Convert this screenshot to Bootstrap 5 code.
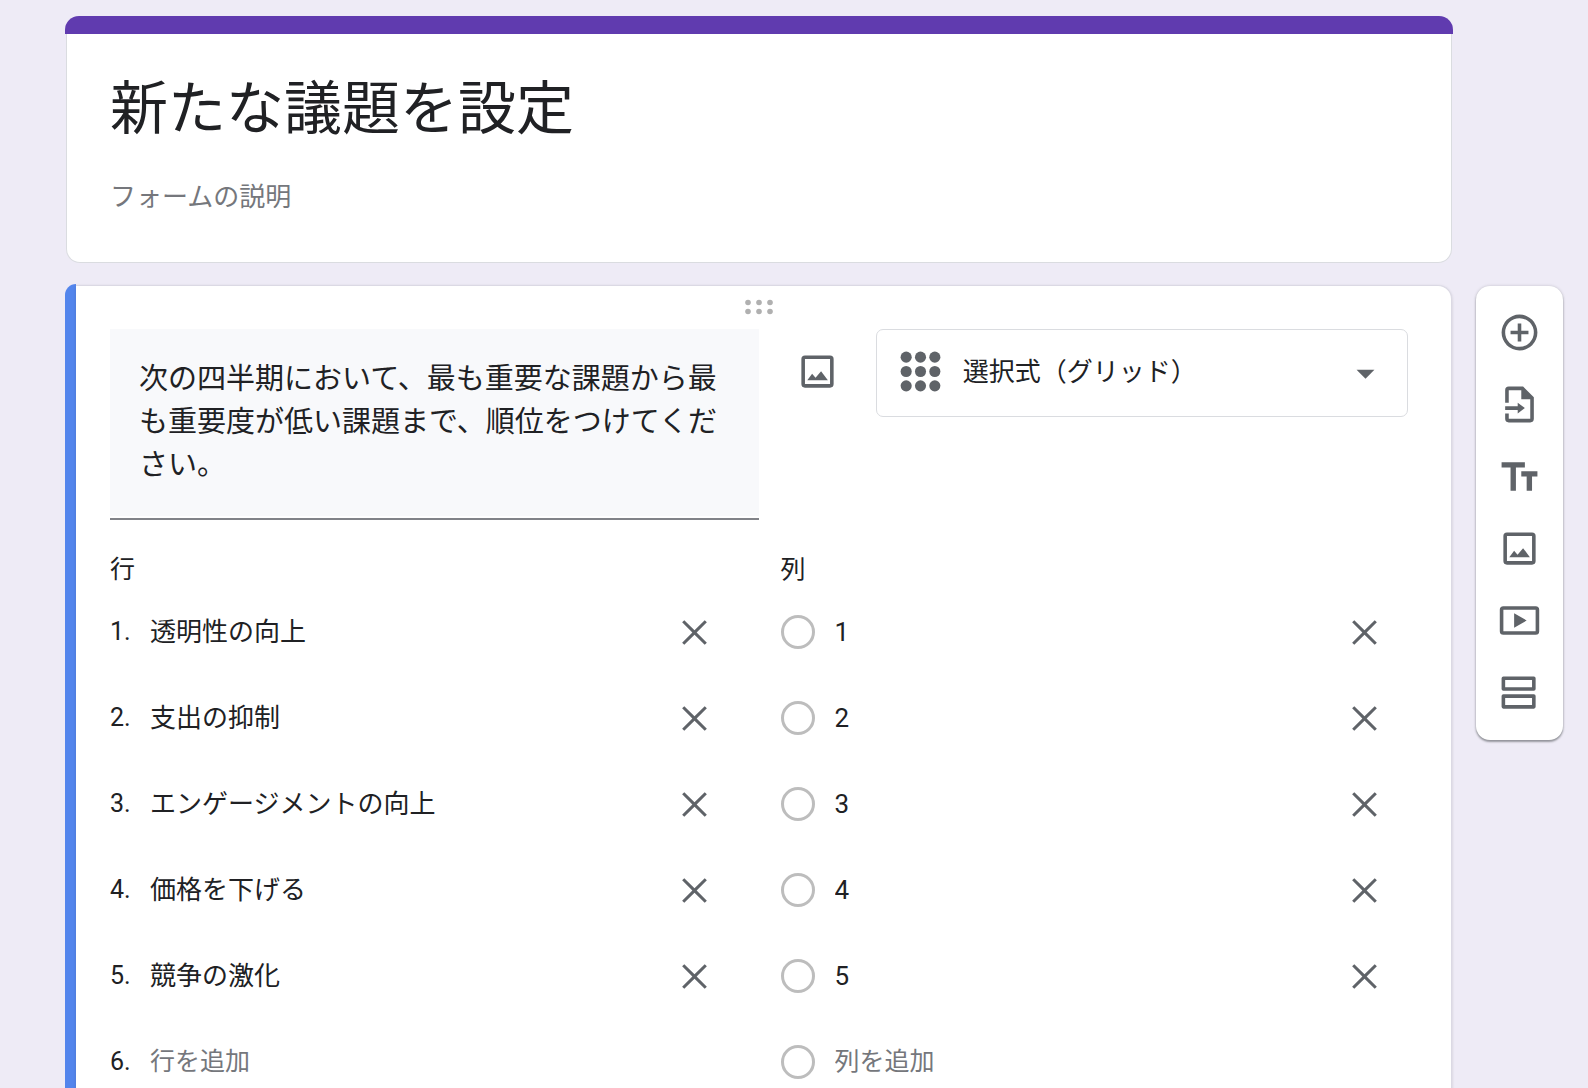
<!DOCTYPE html>
<html lang="ja">
<head>
<meta charset="utf-8">
<meta name="viewport" content="width=device-width, initial-scale=1">
<title>新たな議題を設定</title>
<link rel="stylesheet" href="https://cdn.jsdelivr.net/npm/bootstrap@5.3.0/dist/css/bootstrap.min.css">
<style>
  :root { --ink: #202124; --icon: #5f6368; --hint: #75777c; --edge: #dadce0; }
  body { background: #eeebf6; color: var(--ink); font-family: Roboto, "Noto Sans CJK JP", sans-serif; font-size: 26px; }
  .page { padding: 16px 25px 0 65px; }
  .form-head { margin-right: 110px; }
  .head-bar { height: 18px; background: #603baf; border-radius: 14px 14px 0 0; }
  .head-body { margin: 0 1px; padding: 32px 43px 45px; background: #fff; border: 1px solid var(--edge); border-top: 0; border-radius: 0 0 14px 14px; }
  .plain-field { display: block; width: 100%; min-width: 0; padding: 0; border: 0; outline: 0; background: transparent; color: var(--ink); line-height: 40px; height: 40px; }
  .plain-field::placeholder { color: var(--hint); opacity: 1; }
  .form-title { font-size: 58px; line-height: 86px; height: 86px; }
  .form-desc { margin-top: 25px; }
  .question-row { gap: 23px; margin-top: 21px; }
  .active-bar { width: 11px; background: #5385ec; border-radius: 11px 0 0 0; }
  .question-card { margin: 1px 1px 0 0; padding: 0 43px 24px 34px; background: #fff; border: 1px solid #dbd9e4; border-left: 0; border-radius: 0 14px 0 0; box-shadow: 0 1px 3px rgba(60,64,67,.2); }
  .drag { height: 43px; padding-bottom: 2px; }
  .question-box { flex: 0 0 50%; padding-bottom: 2px; border-bottom: 2px solid #818388; }
  .question-text { display: block; width: 100%; height: 187px; padding: 29px; border: 0; outline: 0; resize: none; overflow: hidden; background: #f8f9fb; color: var(--ink); font-size: 29px; line-height: 43px; }
  .side-image { height: 85px; }
  .type-box { flex: 0 0 41%; height: 88px; padding: 0 20px 3px 22px; border: 1px solid var(--edge); border-radius: 7px; }
  .type-select { appearance: none; margin-left: 21px; padding: 0; border: 0; outline: 0; background: transparent; color: var(--ink); height: 40px; line-height: 40px; }
  .icon-btn { display: flex; align-items: center; justify-content: center; padding: 0; border: 0; background: transparent; color: var(--icon); }
  .icon-btn svg, .type-box svg { display: block; width: 43px; height: 43px; fill: currentColor; color: var(--icon); flex: none; }
  .lists { gap: 43px; margin-top: 30px; }
  .list-name { height: 39px; line-height: 40px; font-size: 25px; }
  .entry { height: 86px; }
  .entry .icon-btn { margin-right: 22px; }
  .entry-no { width: 40px; font-size: 25px; flex: none; }
  .add-field { font-size: 25px; }
  .entry-radio { appearance: none; flex: none; width: 34px; height: 34px; margin: 0 20px 0 0; border: 3px solid #bdbdbd; border-radius: 50%; background: #fff; }
  .tools { width: 87px; flex: none; margin-top: 2px; padding: 10px 0 12px; background: #fff; border-radius: 14px; box-shadow: 0 2px 2px rgba(60,64,67,.45), 0 0 3px rgba(60,64,67,.25); }
  .tools .icon-btn { width: 100%; height: 72px; }
</style>
<script src="https://cdn.jsdelivr.net/npm/bootstrap@5.3.0/dist/js/bootstrap.bundle.min.js"></script>
</head>
<body>
<svg class="d-none" xmlns="http://www.w3.org/2000/svg">
  <symbol id="i-close" viewBox="0 0 24 24"><path d="M18.9 6.3 17.7 5.1 12 10.8 6.3 5.1 5.1 6.3 10.8 12l-5.7 5.7 1.2 1.2L12 13.2l5.7 5.7 1.2-1.2L13.2 12z"/></symbol>
  <symbol id="i-image" viewBox="0 0 24 24"><path d="M19 5v14H5V5h14m0-2H5a2 2 0 0 0-2 2v14a2 2 0 0 0 2 2h14a2 2 0 0 0 2-2V5a2 2 0 0 0-2-2zM6.3 16.9 9 13.2l1.9 2.3 3.1-3.7 3.8 5.1z"/></symbol>
</svg>
<div class="page vh-100 overflow-hidden">
  <header class="form-head">
    <div class="head-bar"></div>
    <div class="head-body">
      <input class="plain-field form-title" type="text" aria-label="フォームのタイトル" value="新たな議題を設定">
      <input class="plain-field form-desc" type="text" aria-label="フォームの説明" placeholder="フォームの説明">
    </div>
  </header>

  <div class="question-row d-flex align-items-start">
    <main class="d-flex flex-grow-1">
      <div class="active-bar flex-shrink-0"></div>
      <section class="question-card flex-grow-1">
        <div class="drag d-flex align-items-center justify-content-center">
          <svg width="28" height="16" viewBox="0 0 28 16" fill="#b0b0b0"><circle cx="3" cy="3.5" r="2.8"/><circle cx="14" cy="3.5" r="2.8"/><circle cx="25" cy="3.5" r="2.8"/><circle cx="3" cy="12.5" r="2.8"/><circle cx="14" cy="12.5" r="2.8"/><circle cx="25" cy="12.5" r="2.8"/></svg>
        </div>
        <div class="d-flex align-items-start">
          <div class="question-box">
            <textarea class="question-text" aria-label="質問">次の四半期において、最も重要な課題から最も重要度が低い課題まで、順位をつけてください。</textarea>
          </div>
          <div class="flex-grow-1 d-flex justify-content-center">
            <button class="icon-btn side-image" type="button" aria-label="画像を追加"><svg><use href="#i-image"/></svg></button>
          </div>
          <div class="type-box d-flex align-items-center">
            <svg viewBox="0 0 24 24"><circle cx="4" cy="4" r="3.1"/><circle cx="12" cy="4" r="3.1"/><circle cx="20" cy="4" r="3.1"/><circle cx="4" cy="12" r="3.1"/><circle cx="12" cy="12" r="3.1"/><circle cx="20" cy="12" r="3.1"/><circle cx="4" cy="20" r="3.1"/><circle cx="12" cy="20" r="3.1"/><circle cx="20" cy="20" r="3.1"/></svg>
            <select class="type-select flex-grow-1" aria-label="質問の形式"><option>選択式（グリッド）</option></select>
            <svg viewBox="0 0 24 24"><path d="M7 11l5 5 5-5z"/></svg>
          </div>
        </div>

        <div class="lists d-flex">
          <div class="flex-fill w-50">
            <div class="list-name">行</div>
            <div class="entry d-flex align-items-center"><label class="entry-no" for="r1">1.</label><input class="plain-field" id="r1" type="text" value="透明性の向上"><button class="icon-btn" type="button" aria-label="行 1 を削除"><svg><use href="#i-close"/></svg></button></div>
            <div class="entry d-flex align-items-center"><label class="entry-no" for="r2">2.</label><input class="plain-field" id="r2" type="text" value="支出の抑制"><button class="icon-btn" type="button" aria-label="行 2 を削除"><svg><use href="#i-close"/></svg></button></div>
            <div class="entry d-flex align-items-center"><label class="entry-no" for="r3">3.</label><input class="plain-field" id="r3" type="text" value="エンゲージメントの向上"><button class="icon-btn" type="button" aria-label="行 3 を削除"><svg><use href="#i-close"/></svg></button></div>
            <div class="entry d-flex align-items-center"><label class="entry-no" for="r4">4.</label><input class="plain-field" id="r4" type="text" value="価格を下げる"><button class="icon-btn" type="button" aria-label="行 4 を削除"><svg><use href="#i-close"/></svg></button></div>
            <div class="entry d-flex align-items-center"><label class="entry-no" for="r5">5.</label><input class="plain-field" id="r5" type="text" value="競争の激化"><button class="icon-btn" type="button" aria-label="行 5 を削除"><svg><use href="#i-close"/></svg></button></div>
            <div class="entry d-flex align-items-center"><label class="entry-no" for="r6">6.</label><input class="plain-field add-field" id="r6" type="text" placeholder="行を追加"></div>
          </div>
          <div class="flex-fill w-50">
            <div class="list-name">列</div>
            <div class="entry d-flex align-items-center"><input class="entry-radio" type="radio" name="col" aria-label="列 1"><input class="plain-field" type="text" aria-label="列 1 の名前" value="1"><button class="icon-btn" type="button" aria-label="列 1 を削除"><svg><use href="#i-close"/></svg></button></div>
            <div class="entry d-flex align-items-center"><input class="entry-radio" type="radio" name="col" aria-label="列 2"><input class="plain-field" type="text" aria-label="列 2 の名前" value="2"><button class="icon-btn" type="button" aria-label="列 2 を削除"><svg><use href="#i-close"/></svg></button></div>
            <div class="entry d-flex align-items-center"><input class="entry-radio" type="radio" name="col" aria-label="列 3"><input class="plain-field" type="text" aria-label="列 3 の名前" value="3"><button class="icon-btn" type="button" aria-label="列 3 を削除"><svg><use href="#i-close"/></svg></button></div>
            <div class="entry d-flex align-items-center"><input class="entry-radio" type="radio" name="col" aria-label="列 4"><input class="plain-field" type="text" aria-label="列 4 の名前" value="4"><button class="icon-btn" type="button" aria-label="列 4 を削除"><svg><use href="#i-close"/></svg></button></div>
            <div class="entry d-flex align-items-center"><input class="entry-radio" type="radio" name="col" aria-label="列 5"><input class="plain-field" type="text" aria-label="列 5 の名前" value="5"><button class="icon-btn" type="button" aria-label="列 5 を削除"><svg><use href="#i-close"/></svg></button></div>
            <div class="entry d-flex align-items-center"><input class="entry-radio" type="radio" name="col" aria-label="列 6"><input class="plain-field add-field" type="text" aria-label="列を追加" placeholder="列を追加"></div>
          </div>
        </div>
      </section>
    </main>

    <aside class="tools">
      <button class="icon-btn" type="button" aria-label="質問を追加"><svg viewBox="0 0 24 24"><path d="M13 7h-2v4H7v2h4v4h2v-4h4v-2h-4V7zm-1-5a10 10 0 1 0 0 20 10 10 0 0 0 0-20zm0 18a8 8 0 1 1 0-16 8 8 0 0 1 0 16z"/></svg></button>
      <button class="icon-btn" type="button" aria-label="質問をインポート"><svg viewBox="0 0 24 24"><path d="M14 2H6a2 2 0 0 0-2 2v7h2V4h7v5h5v11H6v-3H4v3a2 2 0 0 0 2 2h12a2 2 0 0 0 2-2V8zM11 11v2H4v2h7v2l4-3z"/></svg></button>
      <button class="icon-btn" type="button" aria-label="タイトルと説明を追加"><svg viewBox="0 0 24 24"><path d="M2 4v3h5v13h3V7h5V4zM22 9h-9v3h3v8h3v-8h3z"/></svg></button>
      <button class="icon-btn" type="button" aria-label="画像を追加"><svg><use href="#i-image"/></svg></button>
      <button class="icon-btn" type="button" aria-label="動画を追加"><svg viewBox="0 0 24 24"><path d="M21 6v12H3V6h18m0-2H3a2 2 0 0 0-2 2v12a2 2 0 0 0 2 2h18a2 2 0 0 0 2-2V6a2 2 0 0 0-2-2zM9 8v8l7-4z"/></svg></button>
      <button class="icon-btn" type="button" aria-label="セクションを追加"><svg viewBox="0 0 24 24"><path d="M19 5v4H4V5h15m1-2H3a1 1 0 0 0-1 1v6a1 1 0 0 0 1 1h17a1 1 0 0 0 1-1V4a1 1 0 0 0-1-1zM19 15v4H4v-4h15m1-2H3a1 1 0 0 0-1 1v6a1 1 0 0 0 1 1h17a1 1 0 0 0 1-1v-6a1 1 0 0 0-1-1z"/></svg></button>
    </aside>
  </div>
</div>
</body>
</html>
